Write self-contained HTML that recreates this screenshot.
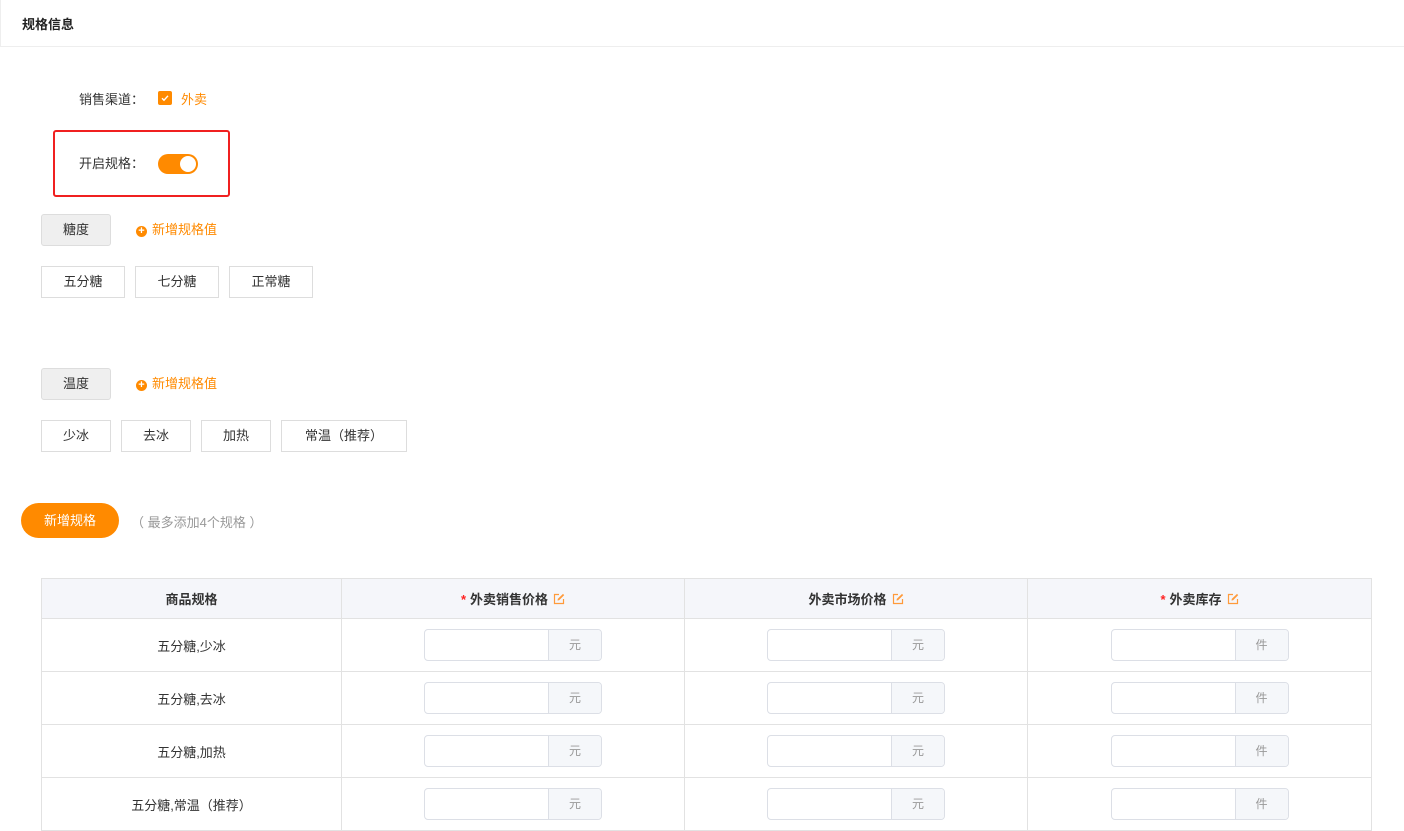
<!DOCTYPE html>
<html><head><meta charset="utf-8"><style>
*{box-sizing:border-box;margin:0;padding:0}
body{width:1404px;height:789px;overflow:hidden;background:#fff;font-family:"Liberation Sans","Noto Sans CJK SC",sans-serif;font-size:13px;color:#333;position:relative}
.a{position:absolute}
.hdr{left:0;top:0;width:1404px;height:47px;border-bottom:1px solid #eee;border-left:1px solid #eee}
.hdr span{position:absolute;left:21px;top:14px;font-weight:bold;font-size:13px;color:#222}
.tag{position:absolute;height:32px;border:1px solid #ddd;line-height:30px;text-align:center;font-size:13px;color:#333;background:#fff}
.gray{background:#efefef;border-color:#ddd;border-radius:3px}
.add{position:absolute;color:#ff8a00;font-size:13px;line-height:16px}
.add i{display:inline-block;width:11px;height:11px;border-radius:50%;background:#ff8a00;color:#fff;font-style:normal;font-size:11px;line-height:11px;text-align:center;font-weight:bold;vertical-align:0px;margin-right:5px}
table{position:absolute;left:41px;top:578px;border-collapse:collapse;width:1331px}
td,th{border:1px solid #e2e2e2;text-align:center;font-size:13px}
th{height:40px;background:#f5f6fa;font-weight:bold;color:#333}
td{height:53px}
.req{color:#f22;margin-right:4px}
.ed{display:inline-block;margin-left:5px;vertical-align:-1px}
.ig{display:inline-flex;width:178px;height:32px;border:1px solid #dcdfe6;border-radius:4px;overflow:hidden;vertical-align:middle}
.ig b{flex:1}
.ig span{width:53px;background:#f5f7fa;border-left:1px solid #dcdfe6;color:#999;font-size:12px;line-height:30px}
</style></head><body>
<div class="a hdr"><span>规格信息</span></div>
<div class="a" style="left:79px;top:89px">销售渠道：</div>
<div class="a" style="left:158px;top:91px;width:14px;height:14px;background:#ff8a00;border-radius:2px"><svg width="14" height="14" viewBox="0 0 14 14"><path d="M4 7.2l2 2 4-4.4" stroke="#fff" stroke-width="1.4" fill="none"/></svg></div>
<div class="a" style="left:181px;top:89px;color:#ff8a00">外卖</div>
<div class="a" style="left:53px;top:130px;width:177px;height:67px;border:2px solid #f02020;border-radius:3px"></div>
<div class="a" style="left:79px;top:153px">开启规格：</div>
<div class="a" style="left:158px;top:154px;width:40px;height:20px;border-radius:10px;background:#ff8a00"><div style="position:absolute;right:2px;top:2px;width:16px;height:16px;border-radius:50%;background:#fff"></div></div>
<div class="tag gray" style="left:41px;top:214px;width:70px">糖度</div>
<div class="add" style="left:136px;top:222px"><i>+</i>新增规格值</div>
<div class="tag" style="left:41px;top:266px;width:84px">五分糖</div>
<div class="tag" style="left:135px;top:266px;width:84px">七分糖</div>
<div class="tag" style="left:229px;top:266px;width:84px">正常糖</div>
<div class="tag gray" style="left:41px;top:368px;width:70px">温度</div>
<div class="add" style="left:136px;top:376px"><i>+</i>新增规格值</div>
<div class="tag" style="left:41px;top:420px;width:70px">少冰</div>
<div class="tag" style="left:121px;top:420px;width:70px">去冰</div>
<div class="tag" style="left:201px;top:420px;width:70px">加热</div>
<div class="tag" style="left:281px;top:420px;width:126px">常温（推荐）</div>
<div class="a" style="left:21px;top:503px;width:98px;height:35px;border-radius:18px;background:#ff8a00;color:#fff;line-height:35px;text-align:center">新增规格</div>
<div class="a" style="left:131px;top:512px;color:#999">（ 最多添加4个规格 ）</div>
<table>
<tr><th style="width:300px">商品规格</th><th style="width:343px"><span class="req">*</span>外卖销售价格<svg class="ed" width="12" height="12" viewBox="0 0 12 12"><path d="M6 1.5H1.5v9h9V6" stroke="#ff9a3a" stroke-width="1.2" fill="none"/><path d="M4.5 7.5l.3-1.6L10 .9l1.2 1.2-5.1 5.1z" fill="#ff9a3a"/></svg></th><th style="width:343px">外卖市场价格<svg class="ed" width="12" height="12" viewBox="0 0 12 12"><path d="M6 1.5H1.5v9h9V6" stroke="#ff9a3a" stroke-width="1.2" fill="none"/><path d="M4.5 7.5l.3-1.6L10 .9l1.2 1.2-5.1 5.1z" fill="#ff9a3a"/></svg></th><th><span class="req">*</span>外卖库存<svg class="ed" width="12" height="12" viewBox="0 0 12 12"><path d="M6 1.5H1.5v9h9V6" stroke="#ff9a3a" stroke-width="1.2" fill="none"/><path d="M4.5 7.5l.3-1.6L10 .9l1.2 1.2-5.1 5.1z" fill="#ff9a3a"/></svg></th></tr>
<tr><td>五分糖,少冰</td><td><div class="ig"><b></b><span>元</span></div></td><td><div class="ig"><b></b><span>元</span></div></td><td><div class="ig"><b></b><span>件</span></div></td></tr>
<tr><td>五分糖,去冰</td><td><div class="ig"><b></b><span>元</span></div></td><td><div class="ig"><b></b><span>元</span></div></td><td><div class="ig"><b></b><span>件</span></div></td></tr>
<tr><td>五分糖,加热</td><td><div class="ig"><b></b><span>元</span></div></td><td><div class="ig"><b></b><span>元</span></div></td><td><div class="ig"><b></b><span>件</span></div></td></tr>
<tr><td>五分糖,常温（推荐）</td><td><div class="ig"><b></b><span>元</span></div></td><td><div class="ig"><b></b><span>元</span></div></td><td><div class="ig"><b></b><span>件</span></div></td></tr>
</table>
</body></html>
